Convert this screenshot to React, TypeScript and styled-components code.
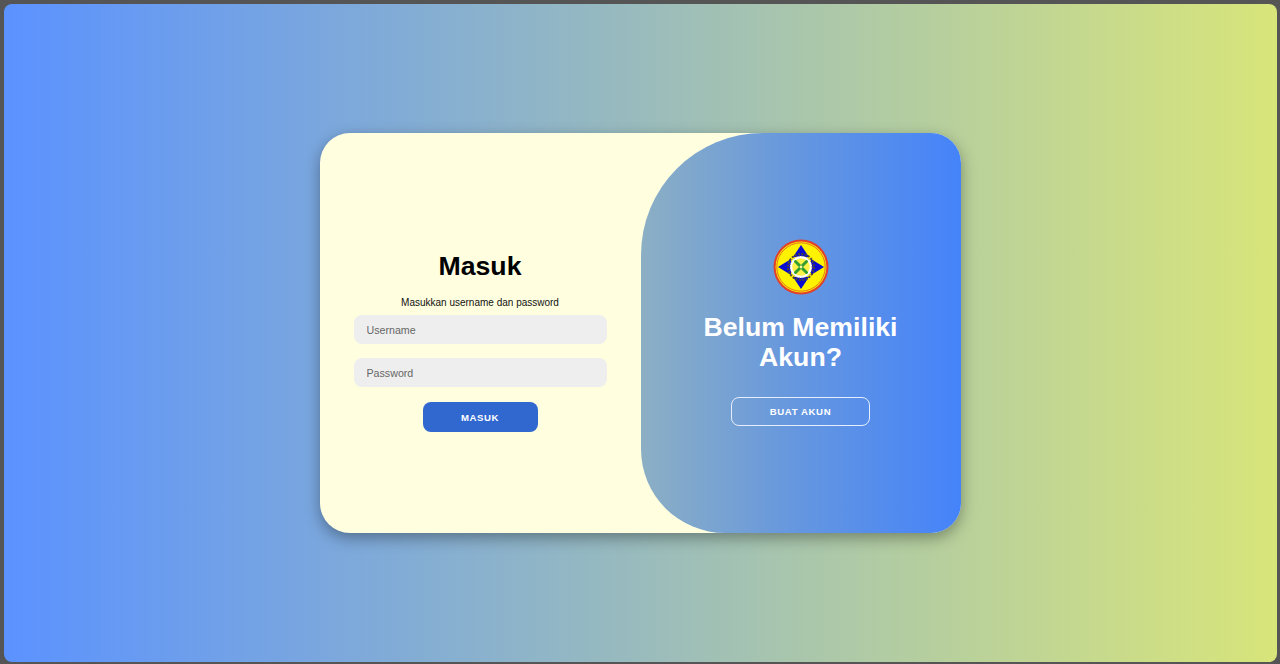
import styled, { createGlobalStyle } from 'styled-components'

const GlobalStyle = createGlobalStyle`
  * {
    box-sizing: border-box;
  }
  html, body {
    margin: 0;
    height: 100%;
    background: #555;
    font-family: "Liberation Sans", Arial, sans-serif;
  }
  #root {
    height: 100%;
  }
`

function Logo() {
  return (
    <svg width="56" height="56" viewBox="0 0 56 56">
      <circle cx="28" cy="28" r="27.5" fill="#e0402c" />
      <circle cx="28" cy="28" r="25.4" fill="#fff200" />
      <circle cx="28" cy="28" r="24.2" fill="none" stroke="#d8402a" strokeWidth="0.7" />
      <polygon points="28,6 36,18 20,18" fill="#0a0ad0" />
      <polygon points="28,50 36,38 20,38" fill="#0a0ad0" />
      <polygon points="5,28 18,20 18,36" fill="#0a0ad0" />
      <polygon points="51,28 38,20 38,36" fill="#0a0ad0" />
      <circle cx="28" cy="28" r="13" fill="none" stroke="#4a4636" strokeWidth="2" strokeDasharray="2 1.4" />
      <circle cx="28" cy="28" r="11" fill="#fff" />
      <circle cx="28" cy="28" r="11" fill="none" stroke="#8a8560" strokeWidth="1" strokeDasharray="1 1.6" />
      <circle cx="28" cy="28" r="8.8" fill="#fff34a" />
      <path d="M22.5 22.5 L33.5 33.5 M33.5 22.5 L22.5 33.5" stroke="#2f9e30" strokeWidth="3" strokeLinecap="round" />
      <circle cx="28" cy="28" r="1.4" fill="#fff8a0" />
    </svg>
  )
}

export default function App() {
  return (
    <Screen>
      <Card>
        <SignInForm>
          <Title>Masuk</Title>
          <Hint>Masukkan username dan password</Hint>
          <Input placeholder="Username" />
          <Input placeholder="Password" type="password" />
          <SubmitButton type="button">Masuk</SubmitButton>
        </SignInForm>
        <TogglePanel>
          <Logo />
          <PanelTitle>Belum Memiliki Akun?</PanelTitle>
          <GhostButton type="button">Buat Akun</GhostButton>
        </TogglePanel>
      </Card>
      <GlobalStyle />
    </Screen>
  )
}

const Screen = styled.div`
  height: 658px;
  margin: 4px 3px 2px 4px;
  border-radius: 8px;
  background: linear-gradient(to right, #5b92ff 0%, #d8e57a 100%);
  display: flex;
  align-items: center;
  justify-content: center;
  padding-right: 1px;
`

const Card = styled.div`
  width: 641px;
  height: 400px;
  border-radius: 30px;
  background: #ffffe0;
  box-shadow: 0 5px 15px rgba(0, 0, 0, 0.35);
  overflow: hidden;
  display: grid;
  grid-template-columns: 321px 320px;
`

const SignInForm = styled.form`
  display: flex;
  flex-direction: column;
  align-items: center;
  padding: 117px 34px 0;
`

const Title = styled.h1`
  margin: 0 0 14px;
  font-size: 26.67px;
  line-height: 32px;
  font-weight: 700;
  color: #000;
`

const Hint = styled.span`
  font-size: 10px;
  line-height: 13px;
  color: #111;
  margin-bottom: 6px;
`

const Input = styled.input`
  width: 100%;
  height: 29px;
  margin-bottom: 14px;
  padding: 0 13px;
  border: none;
  border-radius: 8px;
  background: #eee;
  font-family: inherit;
  font-size: 10.67px;
  outline: none;

  &::placeholder {
    color: #666;
    opacity: 1;
  }
`

const SubmitButton = styled.button`
  width: 115px;
  height: 30px;
  margin-top: 1px;
  border: 1px solid transparent;
  border-radius: 8px;
  background: #3168d0;
  color: #fff;
  font-family: inherit;
  font-size: 9.6px;
  font-weight: 700;
  letter-spacing: 0.6px;
  text-transform: uppercase;
`

const TogglePanel = styled.div`
  display: flex;
  flex-direction: column;
  align-items: center;
  padding-top: 106px;
  border-radius: 122px 0 0 84px;
  background: linear-gradient(to right, #8cafc4 0%, #6496e0 50%, #4583fa 100%);
`

const PanelTitle = styled.h2`
  width: 220px;
  margin: 17px 0 25px;
  font-size: 26.67px;
  line-height: 30px;
  font-weight: 700;
  text-align: center;
  color: #fff;
`

const GhostButton = styled.button`
  width: 139px;
  height: 29px;
  border: 1px solid #e6eefc;
  border-radius: 8px;
  background: transparent;
  color: #fff;
  font-family: inherit;
  font-size: 9.6px;
  font-weight: 700;
  letter-spacing: 0.6px;
  text-transform: uppercase;
`
